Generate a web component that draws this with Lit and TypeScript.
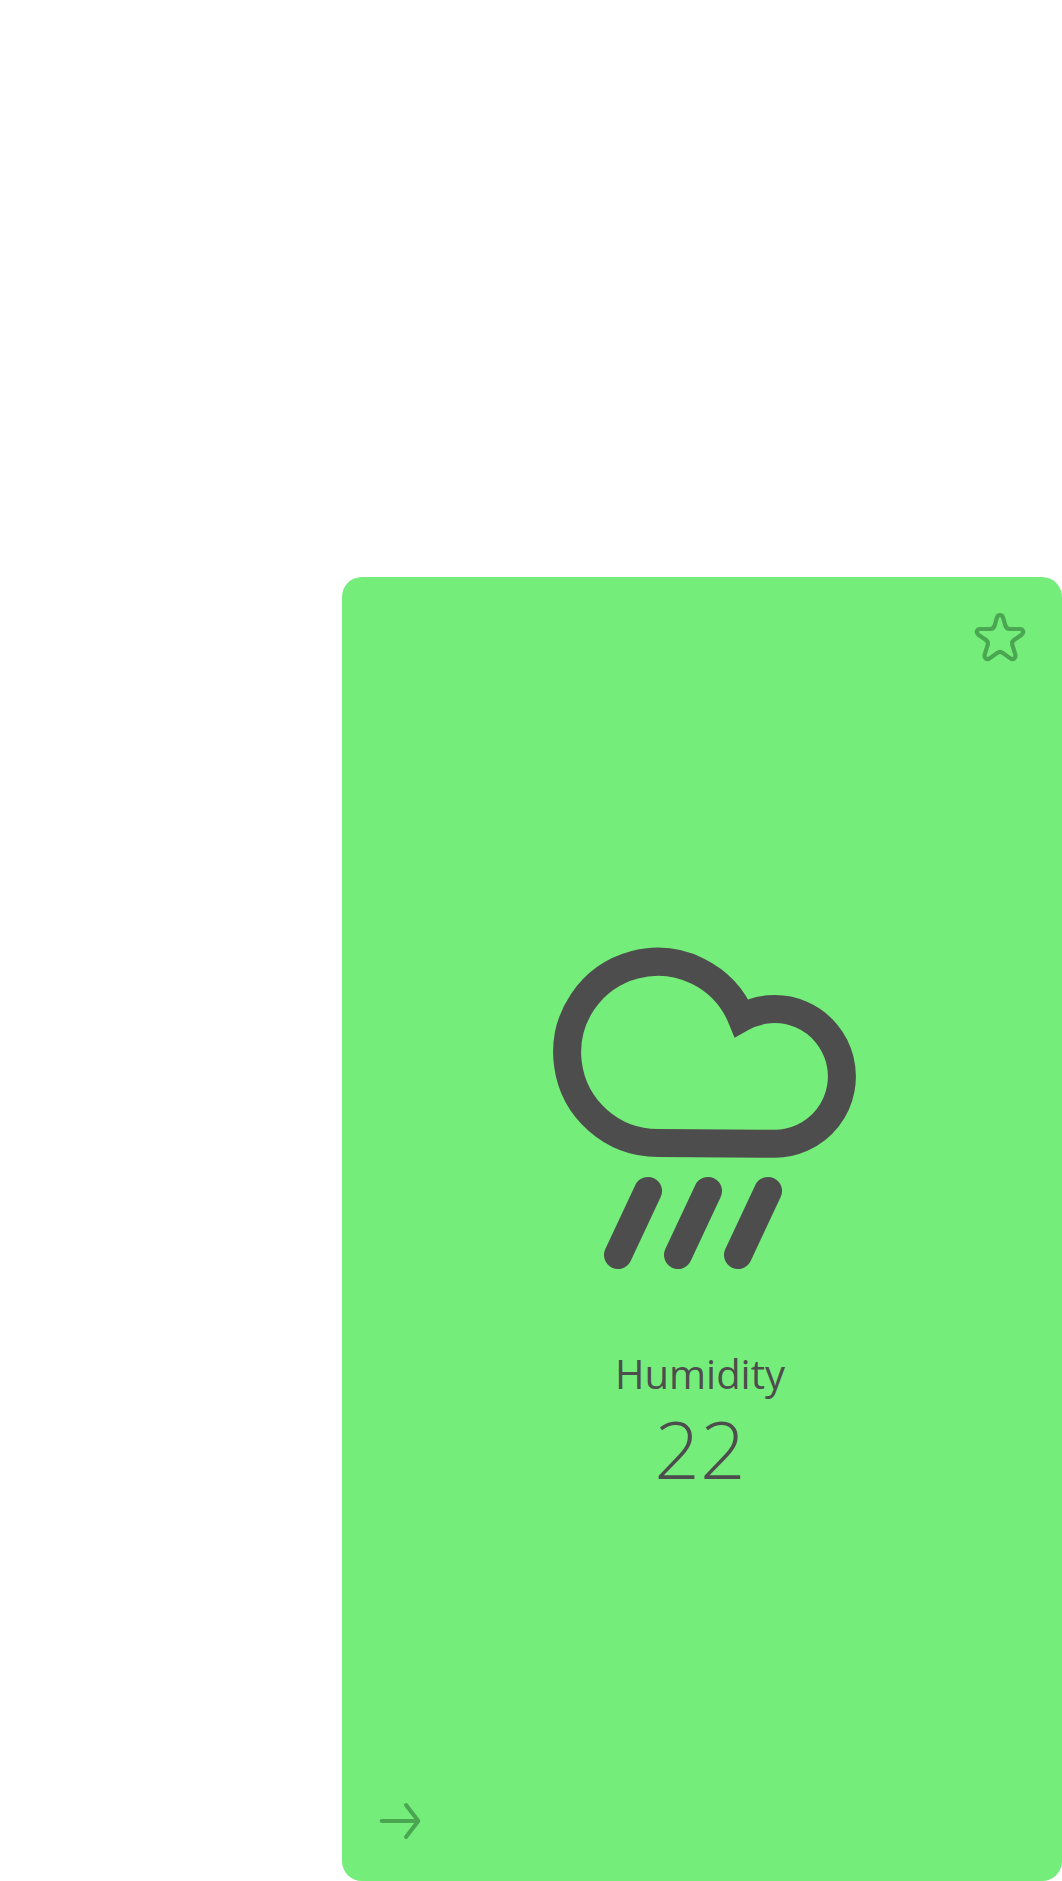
import { LitElement, html, css } from "lit";
import { customElement, property } from "lit/decorators.js";

@customElement("weather-icon")
class WeatherIcon extends LitElement {
  static styles = css`
    :host { display: block; }
    svg { display: block; }
    .stroke { fill: none; stroke: #4d4d4d; stroke-width: 28; stroke-miterlimit: 10; }
    .rain { stroke-linecap: round; }
  `;
  render() {
    return html`<svg width="330" height="350" viewBox="540 930 330 350">
      <path class="stroke" d="M657.7 1143A90.6 90.6 0 1 1 741.5 1017.8A67.3 67.3 0 1 1 774 1143.7Z" />
      <path class="stroke rain" d="M648 1191L618 1255M708 1191L678 1255M768 1191L738 1255" />
    </svg>`;
  }
}

@customElement("sensor-card")
class SensorCard extends LitElement {
  @property() label = "";
  @property() value = "";

  static styles = css`
    :host {
      display: flex;
      flex-direction: column;
      box-sizing: border-box;
      width: 720px;
      height: 1304px;
      border-radius: 20px;
      background: #75ed7b;
      color: #4d4d4d;
      font-family: "Open Sans", "Noto Sans", sans-serif;
    }
    .top { display: flex; justify-content: flex-end; padding: 23px 22px 0 0; height: 330px; }
    .body { display: flex; flex-direction: column; align-items: center; flex: 1; }
    weather-icon { margin-left: 6px; }
    .label { margin: 67px 4px 0 0; font-size: 40px; line-height: 54px; }
    .value { margin: 0 4px 0 0; font-size: 80px; line-height: 93px; font-weight: 300; }
    .bottom { display: flex; padding: 0 0 31px 28px; }
    .tool { display: block; fill: none; stroke: #4aa650; stroke-linecap: round; stroke-linejoin: round; }
  `;

  render() {
    return html`
      <div class="top">
        <svg class="tool" width="80" height="75" viewBox="0 0 240 225" stroke-width="12.5">
          <path d="M111 52C114 43 126 43 129 52L136 76C138 83 142 87 149 87H179C190 87 193 97 185 104L162 120C157 124 155 129 157 135L166 164C168 174 160 181 151 175L127 158C122 155 118 155 113 158L89 175C80 181 72 174 74 164L83 135C85 129 83 124 78 120L55 104C47 97 50 87 61 87H91C98 87 102 83 104 76Z" />
        </svg>
      </div>
      <div class="body">
        <weather-icon></weather-icon>
        <div class="label">${this.label}</div>
        <div class="value">${this.value}</div>
      </div>
      <div class="bottom">
        <svg class="tool" width="60" height="60" viewBox="0 0 180 180" stroke-width="12">
          <path d="M35 93H145M108 45L145 93L108 141" />
        </svg>
      </div>
    `;
  }
}

@customElement("app-root")
class AppRoot extends LitElement {
  static styles = css`
    :host {
      display: flex;
      justify-content: flex-end;
      align-items: flex-end;
      width: 1062px;
      height: 1881px;
      background: #fff;
    }
  `;
  render() {
    return html`<sensor-card label="Humidity" value="22"></sensor-card>`;
  }
}
